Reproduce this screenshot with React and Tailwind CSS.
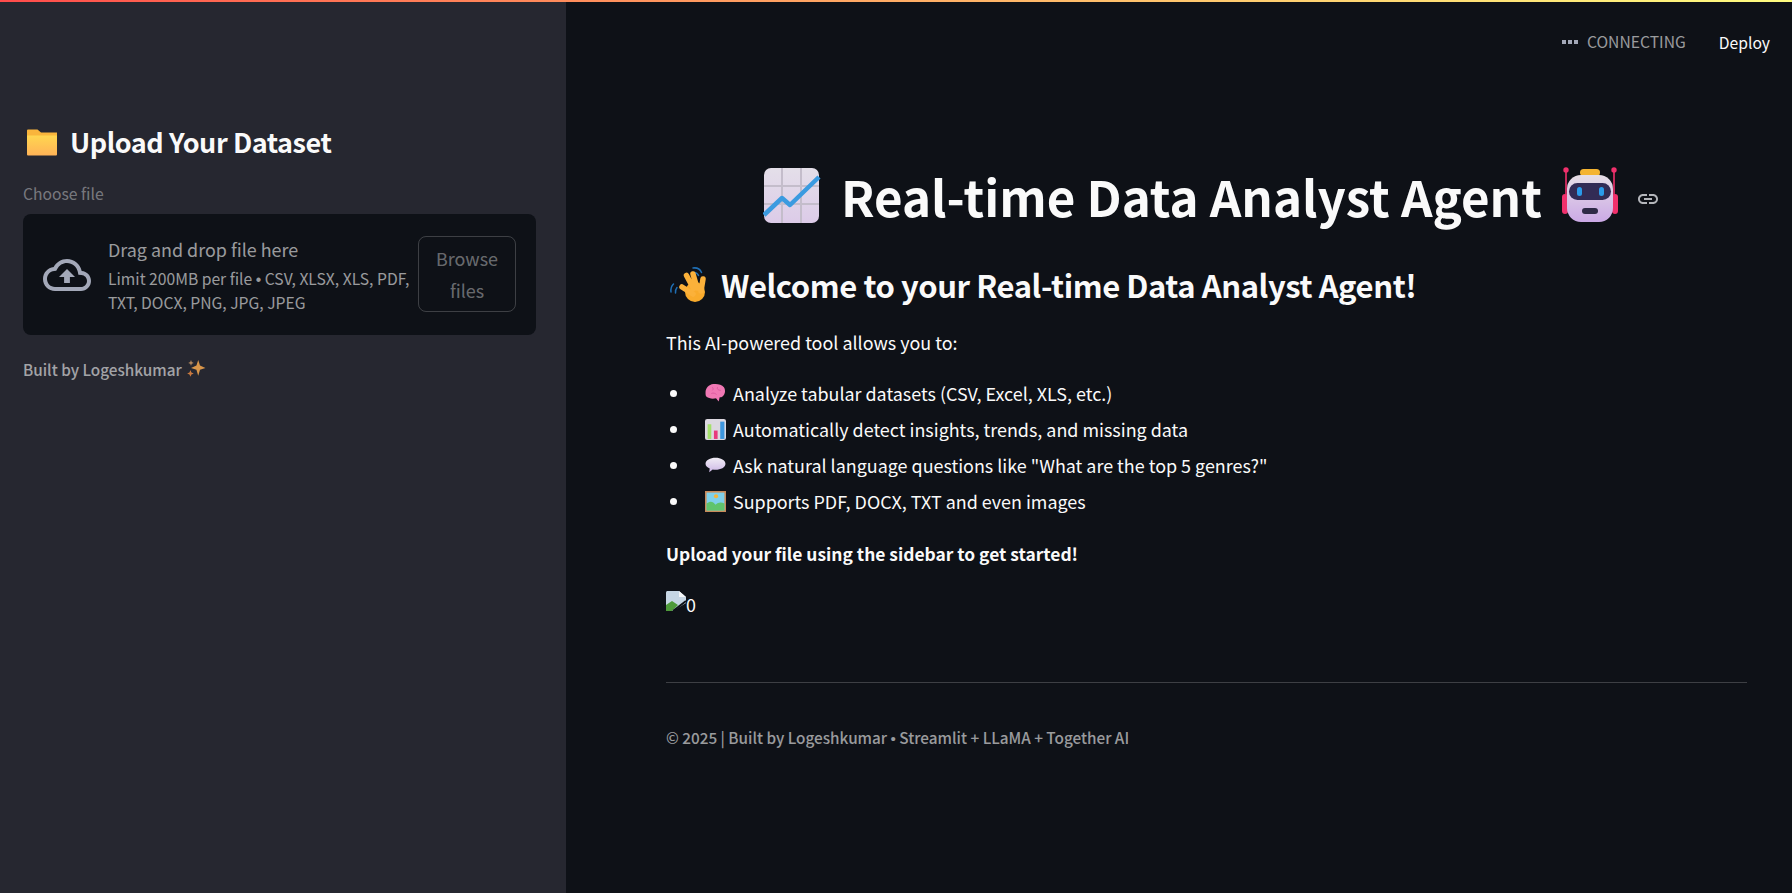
const FEATURES = [
  { Icon: BrainEmoji, text: 'Analyze tabular datasets (CSV, Excel, XLS, etc.)' },
  { Icon: BarsEmoji, text: 'Automatically detect insights, trends, and missing data' },
  { Icon: BubbleEmoji, text: 'Ask natural language questions like "What are the top 5 genres?"' },
  { Icon: PictureEmoji, text: 'Supports PDF, DOCX, TXT and even images' },
]

export default function App() {
  return (
    <div className="h-screen flex flex-col overflow-hidden bg-[#0e1117] text-[#fafafa] font-['Noto_Sans_CJK_SC','Noto_Sans',sans-serif]">
      <div className="h-[2px] flex-shrink-0 bg-gradient-to-r from-[#ff4b4b] to-[#fffd80]" />
      <div className="flex flex-1 min-h-0">
        <Sidebar />
        <Main />
      </div>
    </div>
  )
}

function Dot() {
  return <span className="font-['Liberation_Sans',sans-serif]">•</span>
}

function Sidebar() {
  return (
    <aside className="w-[566px] flex-shrink-0 bg-[#262730] pl-[23px] pr-[30px] pt-[122px]">
      <h2 className="flex items-center text-[27px] leading-[36px] font-bold tracking-[-0.44px]">
        <FolderEmoji />
        <span className="ml-[12px]">Upload Your Dataset</span>
      </h2>
      <p className="mt-[23px] text-[15.68px] leading-[22px] text-[#fafafa]/40">Choose file</p>
      <div className="mt-[9px] h-[121px] flex items-center rounded-lg bg-[#0e1117] px-[20px]">
        <CloudIcon />
        <div className="ml-[17px] w-[305px] flex-shrink-0">
          <p className="text-[17.92px] leading-[26px] text-[#fafafa]/60">Drag and drop file here</p>
          <p className="mt-[5px] text-[15.68px] leading-[23px] text-[#fafafa]/60">
            Limit 200MB per file <Dot /> CSV, XLSX, XLS, PDF, TXT, DOCX, PNG, JPG, JPEG
          </p>
        </div>
        <button className="ml-auto -mt-[2px] w-[98px] h-[76px] flex-shrink-0 rounded-lg border border-[#fafafa]/20 text-[17.92px] leading-[32px] text-[#fafafa]/40 px-4">
          Browse files
        </button>
      </div>
      <p className="mt-[23px] flex items-center text-[15.3px] leading-[22px] font-medium text-[#fafafa]/60">
        Built by Logeshkumar
        <SparklesEmoji />
      </p>
    </aside>
  )
}

function Main() {
  return (
    <main className="flex-1 min-w-0 pl-[100px] pr-[45px]">
      <header className="h-[40px] mt-[20px] -mr-[23px] flex items-center justify-end">
        <span className="flex items-center text-[15.68px] leading-[22px] text-[#fafafa]/60">
          <span className="flex gap-[2px] mr-[9px]">
            <i className="w-1 h-1 bg-[#a3a8b8]" />
            <i className="w-1 h-1 bg-[#a3a8b8]" />
            <i className="w-1 h-1 bg-[#a3a8b8]" />
          </span>
          CONNECTING
        </span>
        <span className="ml-[33px] mt-[2px] text-[15.68px] leading-[22px]">Deploy</span>
      </header>

      <h1 className="mt-[99px] pl-[10px] flex items-center justify-center text-[49.26px] leading-[70px] font-bold">
        <ChartEmoji />
        <span className="ml-[20px]">Real-time Data Analyst Agent</span>
        <RobotEmoji />
        <LinkIcon />
      </h1>

      <h2 className="mt-[32px] flex items-center text-[31px] leading-[44px] font-bold tracking-[-0.43px]">
        <WaveEmoji />
        <span className="ml-[10px]">Welcome to your Real-time Data Analyst Agent!</span>
      </h2>

      <p className="mt-[21px] text-[17.92px] leading-[28px]">This AI-powered tool allows you to:</p>

      <ul className="mt-[23px] flex flex-col gap-[8px]">
        {FEATURES.map(({ Icon, text }) => (
          <li key={text} className="flex items-center text-[17.92px] leading-[28px]">
            <span className="w-[7px] h-[7px] rounded-full bg-[#fafafa] ml-[4px] mr-[28px]" />
            <Icon />
            <span className="ml-[7px]">{text}</span>
          </li>
        ))}
      </ul>

      <p className="mt-[25px] text-[17.4px] leading-[28px] font-bold">Upload your file using the sidebar to get started!</p>

      <p className="mt-[18px] h-[28px] flex items-end text-[17.92px] leading-[20px]">
        <BrokenImage />0
      </p>

      <hr className="mt-[68px] border-0 h-px bg-[#fafafa]/20" />

      <p className="mt-[43px] text-[15.3px] leading-[22px] font-medium text-[#fafafa]/60">
        © 2025 | Built by Logeshkumar <Dot /> Streamlit + LLaMA + Together AI
      </p>
    </main>
  )
}

function CloudIcon() {
  return (
    <svg className="w-[48px] h-[48px] flex-shrink-0" viewBox="0 0 24 24" fill="#a3a8b8">
      <path d="M19.35 10.04C18.67 6.59 15.64 4 12 4 9.11 4 6.6 5.64 5.35 8.04 2.34 8.36 0 10.91 0 14c0 3.31 2.69 6 6 6h13c2.76 0 5-2.24 5-5 0-2.64-2.05-4.78-4.65-4.96zM19 18H6c-2.21 0-4-1.79-4-4 0-2.05 1.53-3.76 3.56-3.97l1.07-.11.5-.95C8.08 7.14 9.94 6 12 6c2.62 0 4.88 1.86 5.39 4.43l.3 1.5 1.53.11c1.56.1 2.78 1.41 2.78 2.96 0 1.65-1.35 3-3 3zM8 13h2.55v3h2.9v-3H16l-4-4z" />
    </svg>
  )
}

function LinkIcon() {
  return (
    <svg className="w-[24px] h-[24px] ml-[17px] mt-[6px] flex-shrink-0" viewBox="0 0 24 24" fill="#b4b6bb">
      <path d="M3.9 12c0-1.71 1.39-3.1 3.1-3.1h4V7H7c-2.76 0-5 2.24-5 5s2.24 5 5 5h4v-1.9H7c-1.71 0-3.1-1.39-3.1-3.1zM8 13h8v-2H8v2zm9-6h-4v1.9h4c1.71 0 3.1 1.39 3.1 3.1s-1.39 3.1-3.1 3.1h-4V17h4c2.76 0 5-2.24 5-5s-2.24-5-5-5z" />
    </svg>
  )
}

function FolderEmoji() {
  return (
    <svg className="w-[32px] h-[32px] ml-[3px] flex-shrink-0" viewBox="0 0 32 32">
      <defs>
        <linearGradient id="folderFront" x1="0" y1="0" x2="0" y2="1">
          <stop offset="0" stopColor="#ffd650" />
          <stop offset="1" stopColor="#ffb357" />
        </linearGradient>
      </defs>
      <path d="M1 4.5a1 1 0 0 1 1-1h9.500l3.500 3h16v5H1z" fill="#f9b53c" />
      <path d="M1 9.500h30v19a1 1 0 0 1-1 1H2a1 1 0 0 1-1-1z" fill="url(#folderFront)" />
    </svg>
  )
}

function SparklesEmoji() {
  return (
    <svg className="w-[20px] h-[20px] ml-[4px] flex-shrink-0" viewBox="0 0 18 18" fill="#d9964a">
      <path d="M11 1l1.600 4.900L17.500 8l-4.900 1.700L11 15l-1.600-5.300L4.500 8l4.900-2.100z" />
      <path d="M4.500 1l.7 1.800L7 3.500l-1.800.7L4.500 6l-.7-1.800L2 3.500l1.800-.7z" fill="#b5895f" />
      <path d="M4 10l.9 2.100 2.100.9-2.100.9L4 16l-.9-2.100L1 13l2.100-.9z" fill="#c9793f" />
    </svg>
  )
}

function ChartEmoji() {
  return (
    <svg className="w-[58px] h-[58px] flex-shrink-0" viewBox="0 0 58 58">
      <defs>
        <linearGradient id="chartBg" x1="0" y1="0" x2="0" y2="1">
          <stop offset="0" stopColor="#e4dfe9" />
          <stop offset="1" stopColor="#dccbe8" />
        </linearGradient>
      </defs>
      <rect x="1" y="1" width="55" height="55" rx="7" fill="url(#chartBg)" />
      <path d="M19 1v55M38 1v55M1 19h55M1 37h55" stroke="#c4bdcb" strokeWidth="2" />
      <path d="M1 48l18-17 8 7L56 10" fill="none" stroke="#3b9be0" strokeWidth="4.500" strokeLinejoin="round" />
    </svg>
  )
}

function RobotEmoji() {
  return (
    <svg className="w-[58px] h-[60px] ml-[19px] flex-shrink-0" viewBox="0 0 58 60">
      <defs>
        <linearGradient id="robotBody" x1="0" y1="0" x2="0" y2="1">
          <stop offset="0" stopColor="#e6dfe6" />
          <stop offset="1" stopColor="#cba9e6" />
        </linearGradient>
      </defs>
      <path d="M5 6v26M53 6v26" stroke="#f0306c" strokeWidth="1.600" />
      <circle cx="5" cy="4" r="2.700" fill="#f0306c" />
      <circle cx="53" cy="4" r="2.700" fill="#f0306c" />
      <rect x="1" y="28" width="6" height="20" rx="3" fill="#f0306c" />
      <rect x="51" y="28" width="6" height="20" rx="3" fill="#f0306c" />
      <rect x="19" y="3" width="20" height="7" rx="3.500" fill="#f4b431" />
      <rect x="6" y="9" width="46" height="47" rx="14" fill="url(#robotBody)" />
      <rect x="8" y="17" width="42" height="17" rx="8.500" fill="#322c55" />
      <rect x="16" y="21" width="5" height="9" rx="2.500" fill="#2a9bea" />
      <rect x="38" y="21" width="5" height="9" rx="2.500" fill="#2a9bea" />
      <rect x="21" y="42" width="16" height="6" rx="3" fill="#2f2a47" />
    </svg>
  )
}

function WaveEmoji() {
  return (
    <svg className="w-[42px] h-[38px] flex-shrink-0 ml-[3px]" viewBox="0 0 42 38">
      <path d="M2 26c-.4-3 .4-6 2.500-8M6.500 27c-.4-2.500.3-4 1.500-5.500M24 2c3.500-.5 7 1 8.500 4.500M24.500 6.500c2.500-.3 4 .7 5 3" fill="none" stroke="#1f6fb5" strokeWidth="1.500" strokeLinecap="round" />
      <circle cx="26" cy="26" r="10" fill="#f9ab2c" />
      <path d="M13 21l11 7M17.500 9.500l7 13M24 8l4 14M34 13l-2 12" stroke="#fbb13a" strokeWidth="5.500" strokeLinecap="round" />
    </svg>
  )
}

function BrainEmoji() {
  return (
    <svg className="w-[21px] h-[21px] flex-shrink-0" viewBox="0 0 20 20">
      <path d="M.5 9C.5 5 3.500 1.500 8 1c3-.4 8 0 10 3 1.700 2.500 1.400 6.500-1 8.500-1 .9-2 1-3 1l-1 4-2.500-3c-3 1-7 .3-9-1.300C.5 12.300.5 10.500.5 9z" fill="#f078b4" />
      <path d="M7 4c1 1 1 2 0 3M12 4c-1 2 1 3 3 3M6 10c2-1 4 0 5 1" fill="none" stroke="#d9559c" strokeWidth="0.800" />
    </svg>
  )
}

function BarsEmoji() {
  return (
    <svg className="w-[21px] h-[21px] flex-shrink-0" viewBox="0 0 20 20">
      <rect width="20" height="20" rx="2" fill="#dcd8e0" />
      <rect x="2.500" y="5" width="3.500" height="14" fill="#a4e06c" />
      <rect x="8.500" y="11" width="3.500" height="8" fill="#e83a7c" />
      <rect x="14.500" y="2.500" width="4" height="16.500" fill="#3d96dd" />
    </svg>
  )
}

function BubbleEmoji() {
  return (
    <svg className="w-[21px] h-[21px] flex-shrink-0" viewBox="0 0 20 20">
      <defs>
        <linearGradient id="bubbleFill" x1="0" y1="0" x2="0" y2="1">
          <stop offset="0" stopColor="#f1edf5" />
          <stop offset="1" stopColor="#cdb8e6" />
        </linearGradient>
      </defs>
      <path d="M10 2.500c5 0 9.500 2.200 9.500 5.800S15 14 10 14c-1 0-2 0-2.700-.2L4 16.500l.5-3.700C2 11.800.5 10.200.5 8.300.5 4.700 5 2.500 10 2.500z" fill="url(#bubbleFill)" />
    </svg>
  )
}

function PictureEmoji() {
  return (
    <svg className="w-[21px] h-[21px] flex-shrink-0" viewBox="0 0 20 20">
      <rect width="20" height="20" fill="#c98a5a" />
      <rect x="1.500" y="1.500" width="17" height="17" fill="#7fd0ea" />
      <circle cx="10.500" cy="5" r="2" fill="#f6b43a" />
      <path d="M1.500 12c4-3 6-2 8.500 1 2.500-2 5-3 8.500-1v6.500h-17z" fill="#5fc46c" />
    </svg>
  )
}

function BrokenImage() {
  return (
    <svg className="w-[20px] h-[20px] flex-shrink-0 mb-[3px]" viewBox="0 0 20 20">
      <path d="M0 1.500C0 .7.700 0 1.500 0H13l7 6v6L7 20H0z" fill="#c6d6e4" />
      <path d="M13 0l7 6h-7z" fill="#f4f6f8" />
      <path d="M0 14l6-4 6 4-6 6H0z" fill="#4e9a3a" />
      <path d="M7 20l13-10" stroke="#0e1117" strokeWidth="2" />
    </svg>
  )
}
